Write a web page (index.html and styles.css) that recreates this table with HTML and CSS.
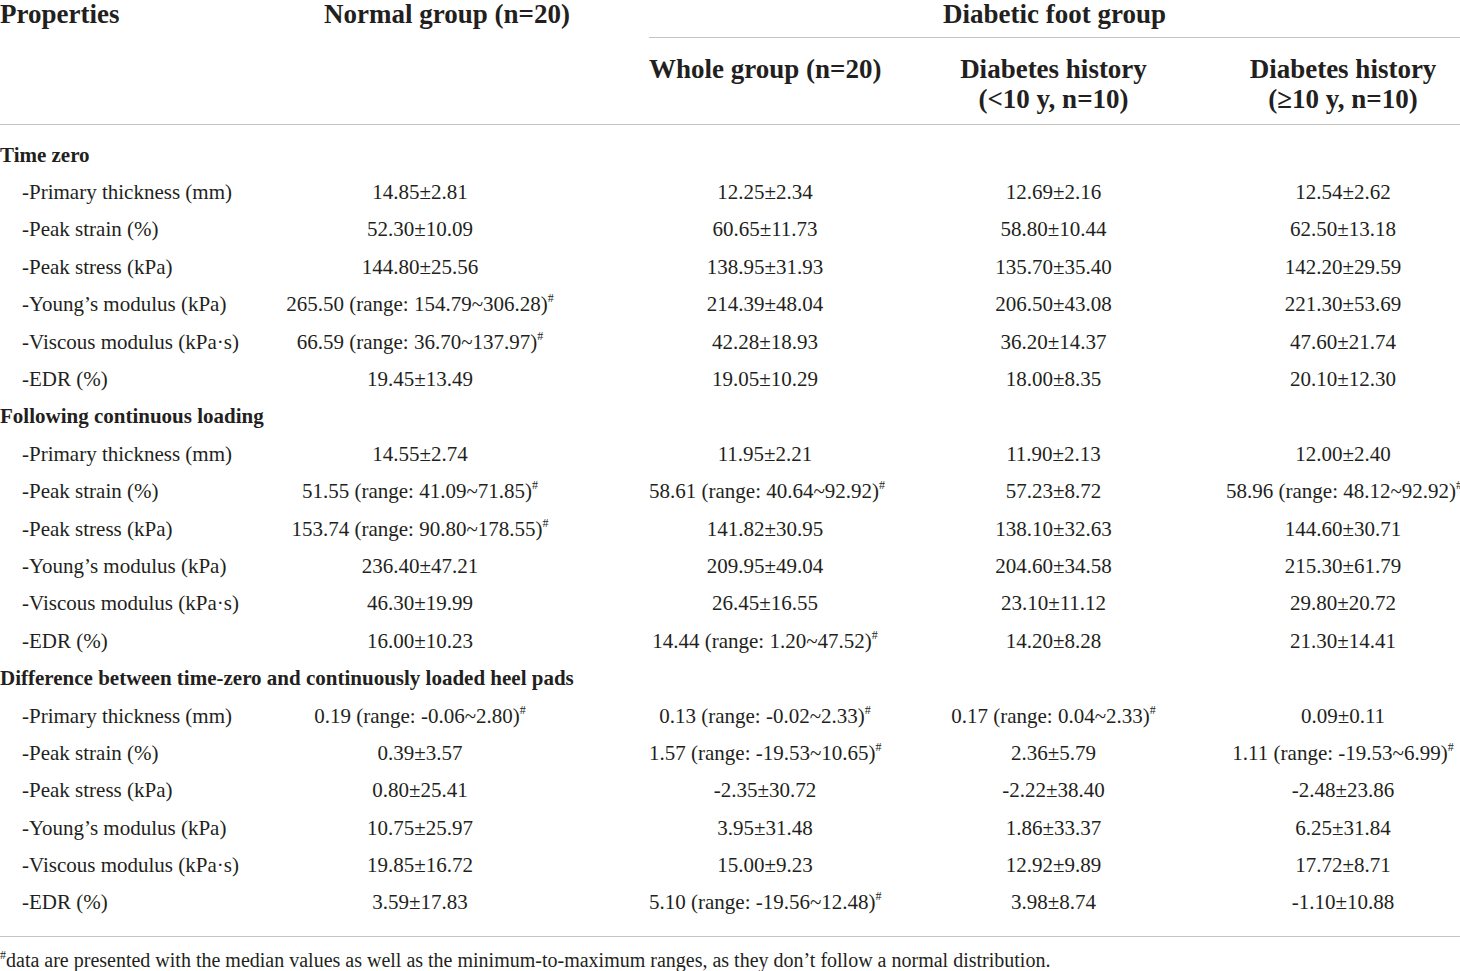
FILE: index.html
```html
<!DOCTYPE html>
<html lang="en">
  <head>
    <meta charset="UTF-8" />
    <meta name="viewport" content="width=device-width, initial-scale=1.0" />
    <title>Heel pad properties</title>
    <link rel="stylesheet" href="styles.css">
  </head>
  <body>
    <table class="tbl">
      <colgroup>
        <col class="c1" />
        <col class="c2" />
        <col class="c3" />
        <col class="c4" />
        <col class="c5" />
      </colgroup>
      <thead>
        <tr class="h1">
          <th rowspan="2" class="prop">Properties</th>
          <th rowspan="2" class="normal">Normal group (n=20)</th>
          <th colspan="3" class="dfg">Diabetic foot group</th>
        </tr>
        <tr class="h2">
          <th>Whole group (n=20)</th>
          <th>Diabetes history<br />(&lt;10 y, n=10)</th>
          <th>Diabetes history<br />(&ge;10 y, n=10)</th>
        </tr>
      </thead>
      <tbody>
        <tr class="sec first"><td colspan="5">Time zero</td></tr>
        <tr><td>-Primary thickness (mm)</td><td>14.85&plusmn;2.81</td><td>12.25&plusmn;2.34</td><td>12.69&plusmn;2.16</td><td>12.54&plusmn;2.62</td></tr>
        <tr><td>-Peak strain (%)</td><td>52.30&plusmn;10.09</td><td>60.65&plusmn;11.73</td><td>58.80&plusmn;10.44</td><td>62.50&plusmn;13.18</td></tr>
        <tr><td>-Peak stress (kPa)</td><td>144.80&plusmn;25.56</td><td>138.95&plusmn;31.93</td><td>135.70&plusmn;35.40</td><td>142.20&plusmn;29.59</td></tr>
        <tr><td>-Young&rsquo;s modulus (kPa)</td><td>265.50 (range: 154.79~306.28)<sup>#</sup></td><td>214.39&plusmn;48.04</td><td>206.50&plusmn;43.08</td><td>221.30&plusmn;53.69</td></tr>
        <tr><td>-Viscous modulus (kPa&middot;s)</td><td>66.59 (range: 36.70~137.97)<sup>#</sup></td><td>42.28&plusmn;18.93</td><td>36.20&plusmn;14.37</td><td>47.60&plusmn;21.74</td></tr>
        <tr><td>-EDR (%)</td><td>19.45&plusmn;13.49</td><td>19.05&plusmn;10.29</td><td>18.00&plusmn;8.35</td><td>20.10&plusmn;12.30</td></tr>

        <tr class="sec"><td colspan="5">Following continuous loading</td></tr>
        <tr><td>-Primary thickness (mm)</td><td>14.55&plusmn;2.74</td><td>11.95&plusmn;2.21</td><td>11.90&plusmn;2.13</td><td>12.00&plusmn;2.40</td></tr>
        <tr><td>-Peak strain (%)</td><td>51.55 (range: 41.09~71.85)<sup>#</sup></td><td>58.61 (range: 40.64~92.92)<sup>#</sup></td><td>57.23&plusmn;8.72</td><td>58.96 (range: 48.12~92.92)<sup>#</sup></td></tr>
        <tr><td>-Peak stress (kPa)</td><td>153.74 (range: 90.80~178.55)<sup>#</sup></td><td>141.82&plusmn;30.95</td><td>138.10&plusmn;32.63</td><td>144.60&plusmn;30.71</td></tr>
        <tr><td>-Young&rsquo;s modulus (kPa)</td><td>236.40&plusmn;47.21</td><td>209.95&plusmn;49.04</td><td>204.60&plusmn;34.58</td><td>215.30&plusmn;61.79</td></tr>
        <tr><td>-Viscous modulus (kPa&middot;s)</td><td>46.30&plusmn;19.99</td><td>26.45&plusmn;16.55</td><td>23.10&plusmn;11.12</td><td>29.80&plusmn;20.72</td></tr>
        <tr><td>-EDR (%)</td><td>16.00&plusmn;10.23</td><td>14.44 (range: 1.20~47.52)<sup>#</sup></td><td>14.20&plusmn;8.28</td><td>21.30&plusmn;14.41</td></tr>

        <tr class="sec"><td colspan="5">Difference between time-zero and continuously loaded heel pads</td></tr>
        <tr><td>-Primary thickness (mm)</td><td>0.19 (range: -0.06~2.80)<sup>#</sup></td><td>0.13 (range: -0.02~2.33)<sup>#</sup></td><td>0.17 (range: 0.04~2.33)<sup>#</sup></td><td>0.09&plusmn;0.11</td></tr>
        <tr><td>-Peak strain (%)</td><td>0.39&plusmn;3.57</td><td>1.57 (range: -19.53~10.65)<sup>#</sup></td><td>2.36&plusmn;5.79</td><td>1.11 (range: -19.53~6.99)<sup>#</sup></td></tr>
        <tr><td>-Peak stress (kPa)</td><td>0.80&plusmn;25.41</td><td>-2.35&plusmn;30.72</td><td>-2.22&plusmn;38.40</td><td>-2.48&plusmn;23.86</td></tr>
        <tr><td>-Young&rsquo;s modulus (kPa)</td><td>10.75&plusmn;25.97</td><td>3.95&plusmn;31.48</td><td>1.86&plusmn;33.37</td><td>6.25&plusmn;31.84</td></tr>
        <tr><td>-Viscous modulus (kPa&middot;s)</td><td>19.85&plusmn;16.72</td><td>15.00&plusmn;9.23</td><td>12.92&plusmn;9.89</td><td>17.72&plusmn;8.71</td></tr>
        <tr class="last"><td>-EDR (%)</td><td>3.59&plusmn;17.83</td><td>5.10 (range: -19.56~12.48)<sup>#</sup></td><td>3.98&plusmn;8.74</td><td>-1.10&plusmn;10.88</td></tr>
      </tbody>
    </table>
    <p class="note"><sup>#</sup>data are presented with the median values as well as the minimum-to-maximum ranges, as they don&rsquo;t follow a normal distribution.</p>
  </body>
</html>
```

FILE: styles.css
```css
* {
  margin: 0;
  padding: 0;
  box-sizing: border-box;
}
body {
  background: #fff;
  color: #231f20;
  font-family: "Liberation Serif", "Times New Roman", serif;
  width: 1460px;
}
.tbl {
  width: 1460px;
  table-layout: fixed;
  border-collapse: collapse;
}
.c1 { width: 191px; }
.c2 { width: 458px; }
.c3 { width: 232px; }
.c4 { width: 345px; }
.c5 { width: 234px; }

thead th {
  font-size: 27px;
  font-weight: bold;
  line-height: 30px;
  text-align: center;
  vertical-align: top;
  white-space: nowrap;
}
.h1 th {
  height: 37px;
  line-height: 28px;
  padding-top: 0;
}
.h1 .prop {
  text-align: left;
  border-bottom: 1px solid #c4c4c4;
}
.h1 .normal {
  padding-left: 54px;
  border-bottom: 1px solid #c4c4c4;
}
.h1 .dfg {
  border-bottom: 1px solid #c4c4c4;
}
.h2 th {
  height: 87px;
  padding-top: 16px;
  border-bottom: 1px solid #c4c4c4;
}

tbody td {
  height: 37.4px;
  font-size: 21px;
  line-height: 24px;
  text-align: center;
  vertical-align: middle;
  white-space: nowrap;
}
tbody td:first-child {
  text-align: left;
  padding-left: 22px;
}
tbody .sec td {
  padding-left: 0;
  font-weight: bold;
}
tbody .first td {
  height: 49.4px;
  padding-top: 12px;
}
tbody .last td {
  height: 52.4px;
  padding-bottom: 15px;
  border-bottom: 1px solid #c4c4c4;
}
sup {
  font-size: 12px;
  line-height: 0;
  vertical-align: 9px;
}
.note {
  font-size: 20px;
  line-height: 24px;
  padding-top: 11px;
  padding-left: 0;
}
.note sup {
  font-size: 12px;
  vertical-align: 8px;
}
```
